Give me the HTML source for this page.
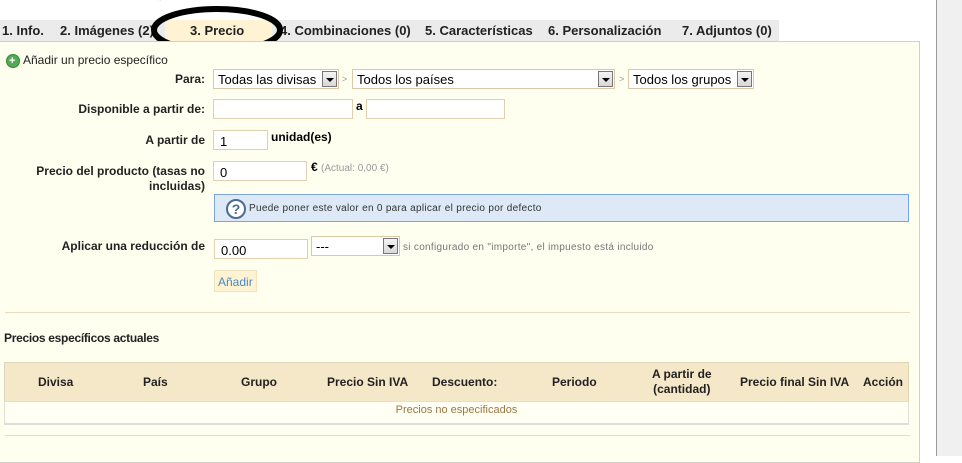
<!DOCTYPE html><html><head><meta charset="utf-8"><style>
body{margin:0;width:962px;height:456px;background:#fff;position:relative;overflow:hidden;font-family:"Liberation Sans",Arial,sans-serif;}
.a{position:absolute;}
.tabs{left:0;top:20px;width:779px;height:21px;background:#ebebeb;}
.tab{position:absolute;top:23px;font-size:13px;font-weight:bold;color:#222;white-space:nowrap}
.panel{left:0;top:41px;width:919px;height:420px;background:#fffff0;border:1px solid #d0d0c8;border-left:none}
.lbl{position:absolute;font-size:12px;font-weight:bold;color:#222;text-align:right;width:205px;left:0}
.inp{position:absolute;height:20px;background:#fff;border:1px solid #e0d0b0;box-sizing:border-box;font-size:13px;padding:3px 6px;color:#000}
.sel{position:absolute;height:20px;background:#fff;border:1px solid #dcc8a8;box-sizing:border-box;font-size:13px;padding:2px 4px;color:#000}
.sel i{position:absolute;right:1px;top:1px;width:15px;height:16px;background:linear-gradient(#f4f4f4,#d8d8d8);border:1px solid #777;box-sizing:border-box}
.sel i:after{content:"";position:absolute;left:3px;top:6px;border:4px solid transparent;border-top:4px solid #000;border-bottom:none}
.gt{position:absolute;font-size:9px;color:#999}
.th{position:absolute;font-size:12px;font-weight:bold;color:#222;text-align:center}
.sm{font-size:10px;letter-spacing:0.3px}
</style></head><body>
<div class="a" style="left:936px;top:0;width:26px;height:456px;background:#f0f0f0;border-left:1px solid #999"></div>
<div class="a" style="left:158px;top:-2px;font-size:10px;color:#333">˜</div>
<div class="a tabs"></div>
<div class="a" style="left:165px;top:20px;width:107px;height:21px;background:#fff3d4"></div>
<div class="tab" style="left:2px">1. Info.</div>
<div class="tab" style="left:60px">2. Imágenes (2)</div>
<div class="tab" style="left:190px">3. Precio</div>
<div class="tab" style="left:280px">4. Combinaciones (0)</div>
<div class="tab" style="left:425px">5. Características</div>
<div class="tab" style="left:548px">6. Personalización</div>
<div class="tab" style="left:682px">7. Adjuntos (0)</div>
<svg class="a" style="left:150px;top:5px" width="136" height="52"><ellipse cx="67" cy="25" rx="63" ry="21" fill="none" stroke="#000" stroke-width="6"/></svg>
<div class="a panel"></div>
<div class="a" style="left:6px;top:54px;width:12px;height:12px;border-radius:50%;background:#5a5;border:1px solid #383"></div>
<div class="a" style="left:9px;top:55px;color:#fff;font-size:11px;font-weight:bold;line-height:12px">+</div>
<div class="a" style="left:23px;top:53px;font-size:12px;color:#222">Añadir un precio específico</div>
<div class="lbl" style="top:72px">Para:</div>
<div class="sel" style="left:213px;top:69px;width:126px">Todas las divisas<i></i></div>
<div class="gt" style="left:342px;top:74px">&gt;</div>
<div class="sel" style="left:352px;top:69px;width:263px">Todos los países<i></i></div>
<div class="gt" style="left:619px;top:74px">&gt;</div>
<div class="sel" style="left:628px;top:69px;width:126px">Todos los grupos<i></i></div>
<div class="lbl" style="top:102px">Disponible a partir de:</div>
<div class="inp" style="left:213px;top:99px;width:140px"></div>
<div class="a" style="left:356px;top:99px;font-size:12px;font-weight:bold">a</div>
<div class="inp" style="left:366px;top:99px;width:139px"></div>
<div class="lbl" style="top:133px">A partir de</div>
<div class="inp" style="left:213px;top:130px;width:55px">1</div>
<div class="a" style="left:271px;top:130px;font-size:12px;font-weight:bold">unidad(es)</div>
<div class="lbl" style="top:164px;line-height:15px">Precio del producto (tasas no<br>incluidas)</div>
<div class="inp" style="left:213px;top:161px;width:94px">0</div>
<div class="a" style="left:311px;top:160px;font-size:12px;font-weight:bold">€ <span class="sm" style="font-weight:normal;color:#999;letter-spacing:0">(Actual: 0,00 €)</span></div>
<div class="a" style="left:214px;top:194px;width:695px;height:28px;background:#dde9f6;border:1px solid #7aa7d8;box-sizing:border-box"></div>
<div class="a" style="left:226px;top:199px;width:20px;height:20px;border-radius:50%;border:2px solid #4a6b95;background:#fff;box-sizing:border-box;text-align:center;font-size:14px;font-weight:bold;color:#4a6b95;line-height:16px">?</div>
<div class="a sm" style="left:249px;top:203px;color:#333">Puede poner este valor en 0 para aplicar el precio por defecto</div>
<div class="lbl" style="top:239px">Aplicar una reducción de</div>
<div class="inp" style="left:214px;top:239px;width:94px">0.00</div>
<div class="sel" style="left:311px;top:236px;width:89px">---<i></i></div>
<div class="a sm" style="left:403px;top:242px;color:#777">si configurado en "importe", el impuesto está incluido</div>
<div class="a" style="left:214px;top:270px;width:43px;height:22px;background:#fff3d4;border:1px solid #f0e4c0;box-sizing:border-box;font-size:12px;color:#4a8ac8;padding:4px 3px">Añadir</div>
<div class="a" style="left:5px;top:312px;width:905px;height:1px;background:#e8dcc0"></div>
<div class="a" style="left:4px;top:331px;font-size:12px;font-weight:bold;color:#222;letter-spacing:-0.3px">Precios específicos actuales</div>
<div class="a" style="left:4px;top:362px;width:905px;height:40px;background:#f5e8c8;border:1px solid #e0d4b8;box-sizing:border-box"></div>
<div class="a" style="left:4px;top:401px;width:905px;height:24px;background:#fffff4;border:1px solid #e0e0d8;border-bottom:2px solid #ddd;box-sizing:border-box"></div>
<div class="th" style="left:38px;top:375px">Divisa</div>
<div class="th" style="left:143px;top:375px">País</div>
<div class="th" style="left:241px;top:375px">Grupo</div>
<div class="th" style="left:327px;top:375px">Precio Sin IVA</div>
<div class="th" style="left:432px;top:375px">Descuento:</div>
<div class="th" style="left:552px;top:375px">Periodo</div>
<div class="th" style="left:652px;top:367px;line-height:15px">A partir de<br>(cantidad)</div>
<div class="th" style="left:740px;top:375px">Precio final Sin IVA</div>
<div class="th" style="left:863px;top:375px">Acción</div>
<div class="a" style="left:0;top:404px;width:913px;text-align:center;font-size:11px;color:#997744">Precios no especificados</div>
<div class="a" style="left:5px;top:435px;width:905px;height:1px;background:#e8dcc0"></div>
</body></html>
